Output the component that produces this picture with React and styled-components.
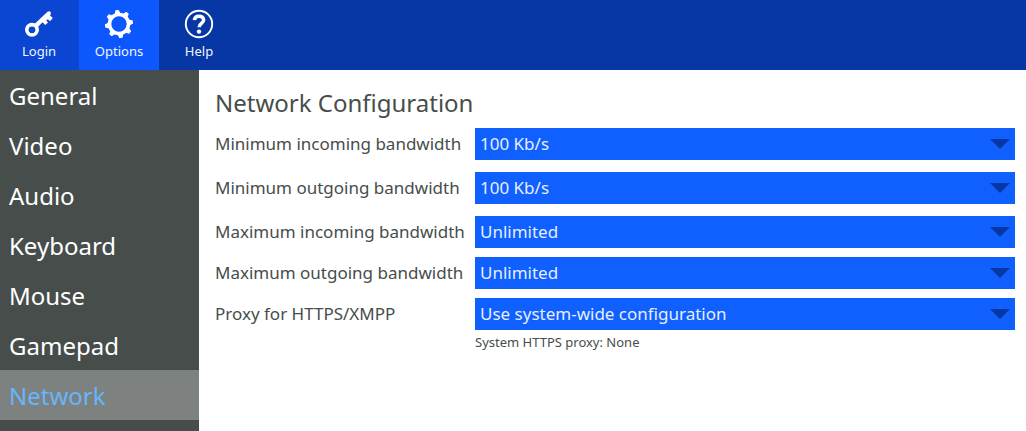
import React, { useState } from "react";
import styled, { createGlobalStyle } from "styled-components";

const GlobalStyle = createGlobalStyle`
  * { box-sizing: border-box; }
  body {
    margin: 0;
    background: #ffffff;
    color: #464d4b;
    font-family: "Noto Sans", sans-serif;
  }
`;

const Page = styled.div`
  display: flex;
  flex-direction: column;
  min-height: 100vh;
`;

const Toolbar = styled.nav`
  display: flex;
  background: #0637a5;
`;

const ToolButton = styled.button`
  display: flex;
  flex-direction: column;
  align-items: center;
  gap: 3px;
  width: ${(p) => (p.$first ? 79 : 80)}px;
  height: 70px;
  padding: 9px ${(p) => (p.$first ? 1 : 0)}px 0 0;
  border: 0;
  background: ${(p) => p.$background || "transparent"};
  color: #f0f4ff;
  font: inherit;
  font-size: 13px;
  line-height: 18px;
  cursor: pointer;
`;

const Icon = styled.svg`
  display: block;
  width: 30px;
  height: 30px;
  color: #ffffff;
`;

const Body = styled.div`
  display: flex;
  flex: 1;
`;

const Sidebar = styled.nav`
  flex: none;
  width: 199px;
  background: #464d4b;
`;

const SideLink = styled.a`
  display: block;
  padding: 2px 9px 0;
  font-size: 24px;
  line-height: 48px;
  text-decoration: none;
  color: ${(p) => (p.$active ? "#66b5fd" : "#ffffff")};
  background: ${(p) => (p.$active ? "#7d8280" : "transparent")};
`;

const Content = styled.main`
  flex: 1;
  min-width: 0;
  padding: 16px 11px 16px 16px;
`;

const Title = styled.h1`
  margin: 0 0 8px;
  font-size: 24px;
  font-weight: 400;
  line-height: 34px;
`;

const Row = styled.div`
  display: grid;
  grid-template-columns: 260px minmax(0, 1fr);
  align-items: center;
  margin-bottom: ${(p) => (p.$compact ? 9 : 12)}px;
`;

const Label = styled.label`
  font-size: 17px;
  line-height: 32px;
  white-space: nowrap;
`;

const SelectBox = styled.div`
  display: grid;
  align-items: center;
  background: #0f60ff;
`;

const Select = styled.select`
  grid-area: 1 / 1;
  appearance: none;
  width: 100%;
  height: 32px;
  padding: 0 40px 2px 5px;
  border: 0;
  border-radius: 0;
  background: transparent;
  color: #e6eeff;
  font: inherit;
  font-size: 17px;
  option { color: #464d4b; background: #ffffff; }
`;

const Arrow = styled.svg`
  grid-area: 1 / 1;
  justify-self: end;
  width: 20px;
  height: 10px;
  margin-right: 5px;
  pointer-events: none;
`;

const Hint = styled.p`
  margin: -6px 0 0 260px;
  font-size: 13px;
  line-height: 18px;
`;

const KeyIcon = () => (
  <Icon viewBox="0 0 30 30" fill="none" stroke="currentColor" aria-hidden="true">
    <circle cx="8" cy="20.800" r="5.200" strokeWidth="3.600" />
    <path
      d="M10.500 15 23.500 2.800Q25 1.800 26.700 3V5.500L26 6.500 28.800 9 26 12.200 23.800 10.200 22.300 11.500 24 13.500 21.300 16 18.500 13.300 13.500 18.500z"
      fill="currentColor"
      stroke="none"
    />
  </Icon>
);

const GearIcon = () => (
  <Icon viewBox="0 0 30 30" fill="none" stroke="currentColor" aria-hidden="true">
    <circle cx="15" cy="15" r="9.500" strokeWidth="3.600" />
    {[0, 45, 90, 135, 180, 225, 270, 315].map((angle) => (
      <path
        key={angle}
        d="M12.700 4.800 13.700 1.500h2.600l1 3.300z"
        fill="currentColor"
        strokeWidth="1"
        strokeLinejoin="round"
        transform={`rotate(${angle - 8} 15 15)`}
      />
    ))}
  </Icon>
);

const HelpIcon = () => (
  <Icon viewBox="0 0 30 30" fill="none" stroke="currentColor" aria-hidden="true">
    <circle cx="15" cy="15" r="13.200" strokeWidth="1.900" />
    <path d="M10.400 11.200C10.600 8.300 12.400 7.200 15 7.200c2.700 0 4.600 1.300 4.600 3.900 0 3.500-4.500 3.300-4.500 7.200" strokeWidth="3.500" />
    <circle cx="15" cy="22.600" r="2.200" fill="currentColor" stroke="none" />
  </Icon>
);

const sections = ["General", "Video", "Audio", "Keyboard", "Mouse", "Gamepad", "Network"];

const settings = [
  { id: "min-in", label: "Minimum incoming bandwidth", options: ["100 Kb/s", "Unlimited"] },
  { id: "min-out", label: "Minimum outgoing bandwidth", options: ["100 Kb/s", "Unlimited"] },
  { id: "max-in", label: "Maximum incoming bandwidth", options: ["Unlimited", "100 Kb/s"], compact: true },
  { id: "max-out", label: "Maximum outgoing bandwidth", options: ["Unlimited", "100 Kb/s"], compact: true },
  { id: "proxy", label: "Proxy for HTTPS/XMPP", options: ["Use system-wide configuration", "No proxy"], compact: true },
];

function SettingRow({ id, label, options, compact }) {
  return (
    <Row $compact={compact}>
      <Label htmlFor={id}>{label}</Label>
      <SelectBox>
        <Select id={id} defaultValue={options[0]}>
          {options.map((option) => (
            <option key={option}>{option}</option>
          ))}
        </Select>
        <Arrow viewBox="0 0 20 10" aria-hidden="true">
          <path d="M0 0h20L10 10z" fill="#0637a5" />
        </Arrow>
      </SelectBox>
    </Row>
  );
}

export default function App() {
  const [active, setActive] = useState("Network");
  return (
    <Page>
      <GlobalStyle />
      <Toolbar>
        <ToolButton $first $background="#0a46d2"><KeyIcon />Login</ToolButton>
        <ToolButton $background="#0d57ff"><GearIcon />Options</ToolButton>
        <ToolButton><HelpIcon />Help</ToolButton>
      </Toolbar>
      <Body>
        <Sidebar>
          {sections.map((name) => (
            <SideLink
              key={name}
              href={`#${name.toLowerCase()}`}
              $active={name === active}
              onClick={() => setActive(name)}
            >
              {name}
            </SideLink>
          ))}
        </Sidebar>
        <Content>
          <Title>Network Configuration</Title>
          {settings.map((setting) => (
            <SettingRow key={setting.id} {...setting} />
          ))}
          <Hint>System HTTPS proxy: None</Hint>
        </Content>
      </Body>
    </Page>
  );
}
